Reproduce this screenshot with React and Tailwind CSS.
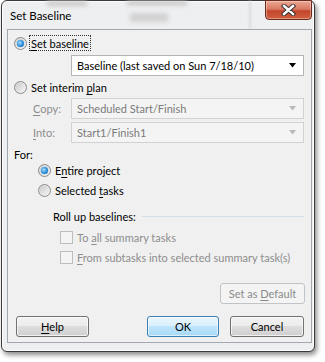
import React from "react";

const font = { fontFamily: 'Lato, "Noto Sans", sans-serif' };

function Radio({ checked }) {
  return (
    <span className="relative flex h-[13px] w-[13px] shrink-0 items-center justify-center rounded-full border border-[#8a8a8a] bg-[linear-gradient(135deg,#d6d6d6,#f7f7f7)]">
      {checked ? (
        <span className="h-[7px] w-[7px] rounded-full bg-[radial-gradient(circle_at_40%_40%,#a9e0ff_0%,#3b9be0_45%,#0d56a8_100%)] shadow-[0_0_1px_#1a64b5]" />
      ) : (
        <span className="h-[9px] w-[9px] rounded-full bg-[linear-gradient(135deg,#cbcbcb,#f4f4f4)]" />
      )}
    </span>
  );
}

function Check() {
  return (
    <span className="h-[13px] w-[13px] shrink-0 border border-[#bdbdbd] bg-[#f4f4f4]" />
  );
}

function U({ children }) {
  return <span className="underline underline-offset-[2px] decoration-1">{children}</span>;
}

function Arrow({ color }) {
  return (
    <svg width="9" height="5" viewBox="0 0 9 5" className="shrink-0">
      <path d="M1 0h7l-3.5 4.5z" fill={color} />
    </svg>
  );
}

function Combo({ text, disabled }) {
  return (
    <div
      className={
        "flex h-[21px] w-[233px] items-center justify-between pl-[5px] pr-[6px] " +
        (disabled
          ? "border border-[#d2d2d2] bg-[#f4f4f4] text-[#7a7a7a]"
          : "border border-[#b5b5b5] bg-white text-black")
      }
    >
      <span>{text}</span>
      <Arrow color={disabled ? "#b9b9b9" : "#000"} />
    </div>
  );
}

function Btn({ children, kind, w }) {
  let cls =
    "flex h-[21px] items-center justify-center rounded-[3px] border ";
  if (kind === "ok")
    cls +=
      "border-[#3c7fb1] bg-[linear-gradient(#eaf6fd_0%,#d9f0fc_45%,#bee6fd_50%,#a7d9f5_100%)] text-black shadow-[inset_0_0_0_1px_rgba(255,255,255,0.6)]";
  else if (kind === "dis")
    cls += "border-[#c0c4c7] bg-[#f4f4f4] text-[#8a8a8a]";
  else
    cls +=
      "border-[#707070] bg-[linear-gradient(#f2f2f2_0%,#ebebeb_50%,#dddddd_50%,#cfcfcf_100%)] text-black shadow-[inset_0_0_0_1px_rgba(255,255,255,0.7)]";
  return (
    <div className={cls} style={{ width: w }}>
      {children}
    </div>
  );
}

export default function App() {
  return (
    <div
      className="h-[362px] w-[325px] overflow-hidden whitespace-nowrap bg-white text-[11px] leading-none text-black"
      style={font}
    >
      <div className="relative ml-[1px] flex h-[352px] w-[314px] flex-col rounded-[6px] border border-[#3a3a3a] bg-[#eeeff1] shadow-[2px_3px_5px_rgba(0,0,0,0.45),inset_0_0_0_1px_rgba(255,255,255,0.85)]">
        {/* blurred background smudges in glass frame */}
        <div className="absolute left-[45px] top-[0px] h-[5px] w-[40px] bg-[#c9c9c9] blur-[2px]" />
        <div className="absolute left-[125px] top-[0px] h-[4px] w-[60px] bg-[#c4c4c4] blur-[2px]" />
        <div className="absolute left-[128px] top-[12px] h-[9px] w-[38px] bg-[#d2d2d2] blur-[2px]" />
        <div className="absolute left-[247px] top-[0px] h-[28px] w-[2px] bg-[#dcdcdc] blur-[1px]" />

        {/* title bar */}
        <div className="relative flex h-[28px] items-start justify-between">
          <span className="ml-[8px] mt-[9px] text-[11.5px] text-black">Set Baseline</span>
          <div className="mr-[2px] mt-[-1px] flex h-[20px] w-[47px] items-center justify-center rounded-b-[4px] border border-[#6b2a1d] bg-[linear-gradient(#eaa692_0%,#d97a63_45%,#c4452c_55%,#d0603f_100%)] shadow-[inset_0_0_0_1px_rgba(255,255,255,0.35)]">
            <svg width="15" height="12" viewBox="0 0 15 12">
              <path
                d="M3 2L7.5 6M7.5 6L12 2M7.5 6L3 10M7.5 6L12 10"
                stroke="#3d3434"
                strokeWidth="4.4"
                strokeLinecap="square"
              />
              <path
                d="M3 2L7.5 6M7.5 6L12 2M7.5 6L3 10M7.5 6L12 10"
                stroke="#ffffff"
                strokeWidth="2.4"
                strokeLinecap="square"
              />
            </svg>
          </div>
        </div>

        {/* client area */}
        <div className="relative ml-[5px] flex h-[314px] w-[305px] flex-col border border-[#a3a8ae] bg-[#f0f0f0] pl-[6px]">
          {/* Set baseline */}
          <div className="mt-[5px] flex h-[16px] items-center">
            <Radio checked />
            <span className="ml-[2px] flex h-[16px] items-center border border-dotted border-[#333] px-[1px]">
              <U>S</U>et baseline
            </span>
          </div>
          <div className="ml-[57px] mt-[4px]">
            <Combo text="Baseline (last saved on Sun 7/18/10)" />
          </div>
          {/* interim */}
          <div className="mt-[3px] flex h-[16px] items-center">
            <Radio />
            <span className="ml-[4px]">
              Set interim <U>p</U>lan
            </span>
          </div>
          <div className="mt-[3px] flex items-center">
            <span className="ml-[19px] w-[38px] text-[#8d8d8d]">
              <U>C</U>opy:
            </span>
            <Combo text="Scheduled Start/Finish" disabled />
          </div>
          <div className="mt-[3px] flex items-center">
            <span className="ml-[19px] w-[38px] text-[#8d8d8d]">
              <U>I</U>nto:
            </span>
            <Combo text="Start1/Finish1" disabled />
          </div>
          {/* For */}
          <div className="mt-[3px] flex h-[16px] items-center">
            <span>For:</span>
          </div>
          <div className="ml-[24px] mt-[0px] flex h-[16px] items-center">
            <Radio checked />
            <span className="ml-[4px]">
              E<U>n</U>tire project
            </span>
          </div>
          <div className="ml-[24px] mt-[4px] flex h-[16px] items-center">
            <Radio />
            <span className="ml-[4px]">
              Selected <U>t</U>asks
            </span>
          </div>
          {/* roll up */}
          <div className="ml-[39px] mt-[10px] flex h-[16px] items-center pr-[7px]">
            <span>Roll up baselines:</span>
            <span className="ml-[6px] h-[1px] flex-1 bg-[#d5dde5]" />
          </div>
          <div className="ml-[46px] mt-[5px] flex h-[16px] items-center text-[#8d8d8d]">
            <Check />
            <span className="ml-[4px]">
              To <U>a</U>ll summary tasks
            </span>
          </div>
          <div className="ml-[46px] mt-[4px] flex h-[16px] items-center text-[#8d8d8d]">
            <Check />
            <span className="ml-[4px]">
              <U>F</U>rom subtasks into selected summary task(s)
            </span>
          </div>
          <div className="mt-[18px] flex justify-end pr-[6px]">
            <Btn kind="dis" w="85px">
              <span>
                Set as <U>D</U>efault
              </span>
            </Btn>
          </div>
          <div className="mt-[12px] flex items-center pr-[6px]">
            <div className="ml-[2px]">
              <Btn w="73px">
                <span>
                  <U>H</U>elp
                </span>
              </Btn>
            </div>
            <div className="ml-[58px]">
              <Btn kind="ok" w="72px">
                OK
              </Btn>
            </div>
            <div className="ml-[11px]">
              <Btn w="74px">Cancel</Btn>
            </div>
          </div>
        </div>
      </div>
    </div>
  );
}
